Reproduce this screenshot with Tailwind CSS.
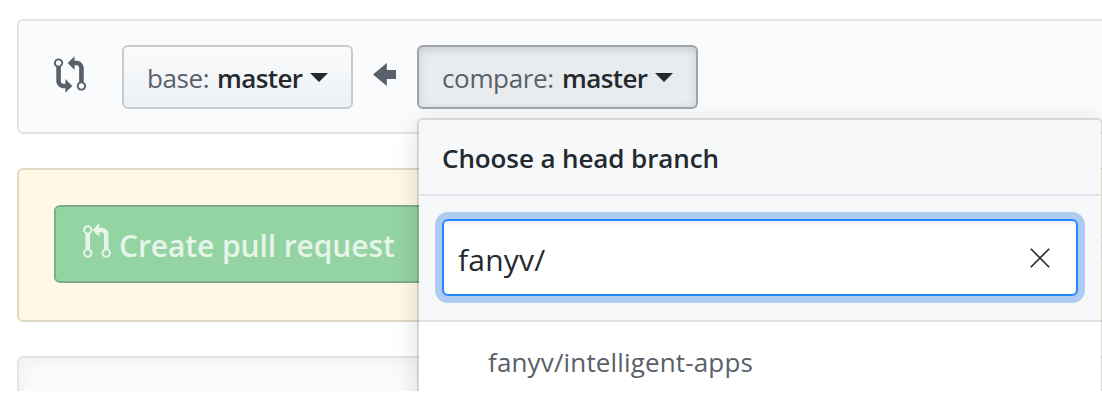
<!DOCTYPE html>
<html lang="en">
<head>
<meta charset="utf-8">
<title>Compare changes</title>
<script src="https://cdn.jsdelivr.net/npm/@tailwindcss/browser@4"></script>
</head>
<body class="bg-white font-['Open_Sans','Noto_Sans',sans-serif] text-[#24292e]">
<main class="relative h-[391px] w-[1102px] overflow-hidden pl-[17px] pt-[19px]">
  <section class="flex h-[115px] w-[1120px] items-start rounded-[6px] border-2 border-[#e1e4e8] bg-[#fafbfc] pl-[35px] pt-6">
    <svg class="mt-[11px] h-[37px] w-8 shrink-0" viewBox="0 0 14 16" fill="#586069"><path fill-rule="evenodd" d="M5 12H4c-.27-.02-.48-.11-.69-.31-.21-.2-.3-.42-.31-.69V4.72A1.993 1.993 0 0 0 2 1a1.993 1.993 0 0 0-1 3.72V11c.03.78.34 1.47.94 2.06.6.59 1.28.91 2.06.94h1v2l3-3-3-3v2zM2 1.8c.66 0 1.2.55 1.2 1.2 0 .65-.55 1.2-1.2 1.2C1.35 4.2.8 3.65.8 3c0-.65.55-1.2 1.2-1.2zm11 9.48V5c-.03-.78-.34-1.47-.94-2.06-.6-.59-1.28-.91-2.06-.94H9V0L6 3l3 3V4h1c.27.02.48.11.69.31.21.2.3.42.31.69v6.28A1.993 1.993 0 0 0 12 15a1.993 1.993 0 0 0 1-3.72zm-1 2.92c-.66 0-1.2-.55-1.2-1.2 0-.65.55-1.2 1.2-1.2.65 0 1.2.55 1.2 1.2 0 .65-.55 1.2-1.2 1.2z"/></svg>
    <button class="ml-9 flex h-16 w-[231px] shrink-0 items-center whitespace-nowrap rounded-[6px] border-2 border-[#c8cbce] bg-linear-to-b from-[#fafbfc] to-[#edf1f4] pl-[23px] pt-0.5 text-[26px]">
      <span class="w-[70px] shrink-0 text-left tracking-[-0.4px] text-[#586069]">base:</span>
      <span class="w-[93px] shrink-0 text-left font-semibold tracking-[-0.6px]">master</span>
      <svg class="-mt-0.5 h-[9px] w-[18px] shrink-0" viewBox="0 0 18 9" fill="#24292e"><path d="M0 0h18L9 9z"/></svg>
    </button>
    <svg class="ml-[20px] mt-[11px] h-[37px] w-[23px] shrink-0" viewBox="0 0 10 16" fill="#586069"><path d="M6 3L0 8l6 5v-3h4V6H6z"/></svg>
    <button class="ml-[21px] flex h-16 w-[281px] shrink-0 items-center whitespace-nowrap rounded-[6px] border-2 border-[#a0a4a8] bg-[#e9ecef] pl-[23px] pt-0.5 text-[26px] shadow-[inset_0_3px_8px_rgba(27,31,35,0.15)]">
      <span class="w-[120px] shrink-0 text-left tracking-[-0.35px] text-[#586069]">compare:</span>
      <span class="w-[93px] shrink-0 text-left font-semibold tracking-[-0.6px]">master</span>
      <svg class="-mt-0.5 h-[9px] w-[18px] shrink-0" viewBox="0 0 18 9" fill="#24292e"><path d="M0 0h18L9 9z"/></svg>
    </button>
  </section>

  <section class="mt-[34px] h-[154px] w-[1120px] rounded-[6px] border-2 border-[#dfd8c2] bg-[#fff8e7] pl-[35px] pt-[35px]">
    <button class="flex h-[78px] w-[400px] items-start whitespace-nowrap rounded-[6px] border-2 border-[#7aae87] bg-[#94d3a2] pl-[27px] text-[#e5f5e9]">
      <svg class="mt-4 h-[37px] w-[28px] shrink-0" viewBox="0 0 12 16" fill="currentColor"><path fill-rule="evenodd" d="M11 11.28V5c-.03-.78-.34-1.47-.94-2.06C9.46 2.35 8.78 2.03 8 2H7V0L4 3l3 3V4h1c.27.02.48.11.69.31.21.2.3.42.31.69v6.28A1.993 1.993 0 0 0 10 15a1.993 1.993 0 0 0 1-3.72zm-1 2.92c-.66 0-1.2-.55-1.2-1.2 0-.65.55-1.2 1.2-1.2.65 0 1.2.55 1.2 1.2 0 .65-.55 1.2-1.2 1.2zM4 3c0-1.11-.89-2-2-2a1.993 1.993 0 0 0-1 3.72v6.56A1.993 1.993 0 0 0 2 15a1.993 1.993 0 0 0 1-3.72V4.72c.59-.34 1-.98 1-1.72zm-.8 10c0 .66-.55 1.2-1.2 1.2-.65 0-1.2-.55-1.2-1.2 0-.65.55-1.2 1.2-1.2.65 0 1.2.55 1.2 1.2zM2 4.2C1.34 4.2.8 3.65.8 3c0-.65.55-1.2 1.2-1.2.65 0 1.2.55 1.2 1.2 0 .65-.55 1.2-1.2 1.2z"/></svg>
      <span class="ml-2 mt-[18px] text-[30px] leading-[42px] font-semibold tracking-[-0.1px]">Create pull request</span>
    </button>
  </section>

  <section class="mt-[34px] h-[100px] w-[1120px] rounded-[6px] border-2 border-[#e1e4e8] bg-[#fafbfc] shadow-[inset_0_0_22px_rgba(27,31,35,0.06)]"></section>

  <div class="absolute left-[417px] top-[118px] h-[320px] w-[686px] rounded-[6px] border-2 border-[#1b1f23]/15 bg-white bg-clip-padding shadow-[0_6px_24px_rgba(27,31,35,0.15)]">
    <div class="flex h-[76px] items-center rounded-t-[4px] border-b-2 border-[#e1e4e8] bg-[#f6f8fa] pl-[23px] pt-0.5">
      <h2 class="whitespace-nowrap text-[26px] font-semibold tracking-[-0.1px]">Choose a head branch</h2>
    </div>
    <div class="h-[126px] border-b-2 border-[#dfe2e5] bg-[#f6f8fa] pl-[23px] pt-[23px]">
      <div class="flex h-[77px] w-[636px] items-center justify-between rounded-[6px] border-2 border-[#2188ff] bg-white pl-[14px] pr-[27px] text-[30px] shadow-[inset_0_2px_4px_rgba(27,31,35,0.08),0_0_0_7px_#aeccf0]">
        <span class="mt-[3px] tracking-[0.2px]">fanyv/</span>
        <svg class="mr-[-0.5px] size-5" viewBox="0 0 20 20" fill="none" stroke="#24292e" stroke-width="1.6"><path d="M.8.8l18.4 18.4M19.2.8L.8 19.2"/></svg>
      </div>
    </div>
    <div class="flex h-[80px] items-center whitespace-nowrap pl-[69px] text-[26px] tracking-[0.15px] text-[#586069]"><span>fanyv/intelligent-apps</span></div>
  </div>
  <!-- edge of the page text that continues past the menu -->
  <div class="absolute left-[1101px] top-[235px] flex w-px flex-col gap-[4px]">
    <span class="h-[3px] bg-[#cfd1d3]"></span>
    <span class="h-4 bg-[#cfd1d3]"></span>
  </div>
</main>
</body>
</html>
